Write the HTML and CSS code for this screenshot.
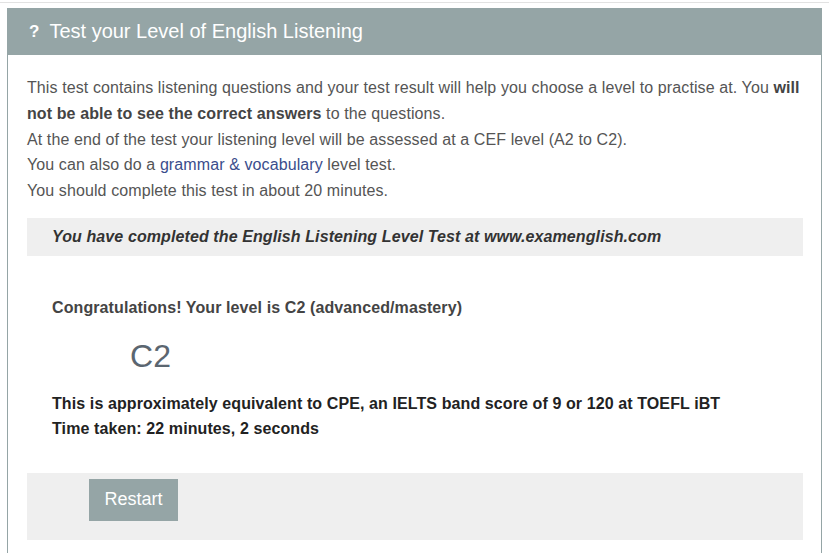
FILE: index.html
```html
<!DOCTYPE html>
<html lang="en">
<head>
    <meta charset="UTF-8">
    <meta name="viewport" content="width=device-width, initial-scale=1.0">
    <title>English Listening Level Test</title>
    <link rel="stylesheet" href="styles.css">
</head>
<body>
    <div class="top-rule"></div>
    <div class="panel">
        <div class="panel-heading">
            <span class="icon">?</span>
            <h1>Test your Level of English Listening</h1>
        </div>

        <div class="panel-body">
            <p class="intro">
                This test contains listening questions and your test result will help you choose a level to practise at. You <b>will not be able to see the correct answers</b> to the questions.<br>
                At the end of the test your listening level will be assessed at a CEF level (A2 to C2).<br>
                You can also do a <a href="#">grammar &amp; vocabulary</a> level test.<br>
                You should complete this test in about 20 minutes.
            </p>

            <div class="notice">You have completed the English Listening Level Test at www.examenglish.com</div>

            <div class="result">
                <p class="congrats">Congratulations! Your level is C2 (advanced/mastery)</p>
                <div class="level">C2</div>
                <p class="details">
                    This is approximately equivalent to CPE, an IELTS band score of 9 or 120 at TOEFL iBT<br>
                    Time taken: 22 minutes, 2 seconds
                </p>
            </div>

            <div class="actions">
                <button type="button">Restart</button>
            </div>
        </div>
    </div>
</body>
</html>
```

FILE: styles.css
```css
body {
    font-family: Arial, "Liberation Sans", sans-serif;
    background-color: #fff;
    color: #555;
    margin: 0;
}

.top-rule {
    margin-top: 2px;
    height: 1px;
    background-color: #e2e2e2;
}

.panel {
    width: 813px;
    margin: 5px 0 0 7px;
    border-left: 1px solid #95a5a6;
    border-right: 1px solid #95a5a6;
    height: 545px;
}

.panel-heading {
    background-color: #95a5a6;
    color: #fff;
    height: 47px;
    display: flex;
    align-items: center;
    padding-left: 21px;
}

.icon {
    font-weight: bold;
    font-size: 17px;
    margin-right: 10px;
}

h1 {
    font-size: 20px;
    font-weight: normal;
    margin: 0;
}

.panel-body {
    padding: 20px 18px 0 19px;
    letter-spacing: 0.1px;
}

.intro {
    font-size: 16px;
    line-height: 25.8px;
    margin: 0 0 14px 0;
}

.intro b {
    color: #444;
}

a {
    color: #3a4d8c;
    text-decoration: none;
}

.notice {
    background-color: #efefef;
    color: #333;
    font-size: 16px;
    font-weight: bold;
    font-style: italic;
    height: 38px;
    line-height: 38px;
    padding-left: 25px;
}

.result {
    padding: 43px 0 32px 25px;
    color: #333;
}

.congrats {
    font-size: 16px;
    line-height: 18px;
    font-weight: bold;
    color: #444;
    margin: 0;
}

.level {
    font-size: 32px;
    color: #5b6670;
    margin: 20px 0 16px 78px;
    line-height: 38px;
}

.details {
    font-size: 16px;
    font-weight: bold;
    line-height: 25px;
    margin: 0;
    color: #222;
}

.actions {
    background-color: #efefef;
    height: 67px;
    padding: 6px 0 0 62px;
    box-sizing: border-box;
}

button {
    background-color: #95a5a6;
    color: #fff;
    border: none;
    width: 89px;
    height: 42px;
    font-family: Arial, "Liberation Sans", sans-serif;
    font-size: 18px;
    letter-spacing: 0;
    cursor: pointer;
}
```
